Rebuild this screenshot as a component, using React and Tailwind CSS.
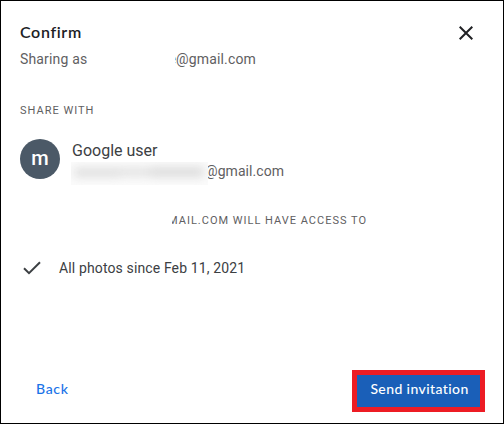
function Redacted() {
  return (
    <div className="flex h-[23px] w-[137px] shrink-0 items-start overflow-hidden bg-[#fbfbfb] pt-[5px]">
      <div className="flex w-full items-center pl-[3px] blur-[5px]">
        <span className="h-[9px] w-[46px] bg-[#dedede]" />
        <span className="h-[8px] w-[30px] bg-[#e0e0e0]" />
        <span className="h-[10px] w-[54px] bg-[#dcdcdc]" />
      </div>
    </div>
  );
}

export default function App() {
  return (
    <main className="flex h-[424px] w-[504px] flex-col border border-black bg-white font-['Roboto',sans-serif] text-[#5f6062]">
      <header className="flex h-[72px] shrink-0 justify-between pr-[30px] pl-[19px]">
        <div className="pt-[21px]">
          <h1 className="h-5 font-['Lato',sans-serif] text-[16px] leading-5 font-semibold tracking-[0.65px] text-[#202124]">Confirm</h1>
          <div className="mt-[7px] flex h-5 text-[14px] leading-5 tracking-[0.16px]">
            <span className="w-[149px]">Sharing as</span>
            <span className="flex w-[87px] justify-end whitespace-nowrap [clip-path:inset(0_0_0_6px)]">e@gmail.com</span>
          </div>
        </div>
        <button aria-label="Close" className="mt-[25px] h-[14px] w-[14px]">
          <svg viewBox="0 0 14 14" className="h-[14px] w-[14px]" fill="none" stroke="#202124" strokeWidth="2">
            <path d="M.7.7 13.3 13.3M13.3.7.7 13.3" />
          </svg>
        </button>
      </header>

      <h2 className="mt-[30px] ml-[19px] h-4 shrink-0 text-[11px] leading-4 font-normal tracking-[1px]">SHARE WITH</h2>

      <section className="mt-[20px] ml-[19px] flex h-[46px] shrink-0">
        <div className="flex h-10 w-10 items-center justify-center rounded-full bg-[#4b5967] pb-[2px] text-[20px] font-medium text-white">m</div>
        <div className="ml-[11px]">
          <div className="h-[23px] pl-[1px] text-[16px] leading-[23px] text-[#3c4043]">Google user</div>
          <div className="flex h-[23px]">
            <Redacted />
            <span className="-ml-[3px] text-[14px] leading-[18px] tracking-[0.06px] whitespace-nowrap [clip-path:inset(0_0_0_3px)]">@gmail.com</span>
          </div>
        </div>
      </section>

      <p className="mt-[28px] ml-[161px] flex h-4 w-[205px] shrink-0 justify-end text-[11px] leading-4 font-normal tracking-[1px] whitespace-nowrap [clip-path:inset(0_0_0_10px)]">MAIL.COM WILL HAVE ACCESS TO</p>

      <div className="mt-[29px] ml-[22px] flex h-5 shrink-0 items-center text-[14px] tracking-[0.13px] text-[#3c4043]">
        <svg viewBox="0 0 18 14" className="h-[14px] w-[18px]" fill="none" stroke="#3c4043" strokeWidth="2">
          <path d="M1 7.2 6 12.2 17 1.2" />
        </svg>
        <span className="ml-[18px] leading-5">All photos since Feb 11, 2021</span>
      </div>

      <footer className="mt-[92px] flex h-[42px] shrink-0 items-center justify-between pr-[18px] pl-[35px] font-['Lato',sans-serif] text-[14px] font-medium">
        <button className="pb-[5px] tracking-[0.7px] text-[#1a73e8]">Back</button>
        <button className="h-[42px] w-[133px] border-[5px] border-[#ed1c24] bg-[#1a5fb8] pb-[5px] pl-[2px] tracking-[0.4px] whitespace-nowrap text-white">Send invitation</button>
      </footer>
    </main>
  );
}
